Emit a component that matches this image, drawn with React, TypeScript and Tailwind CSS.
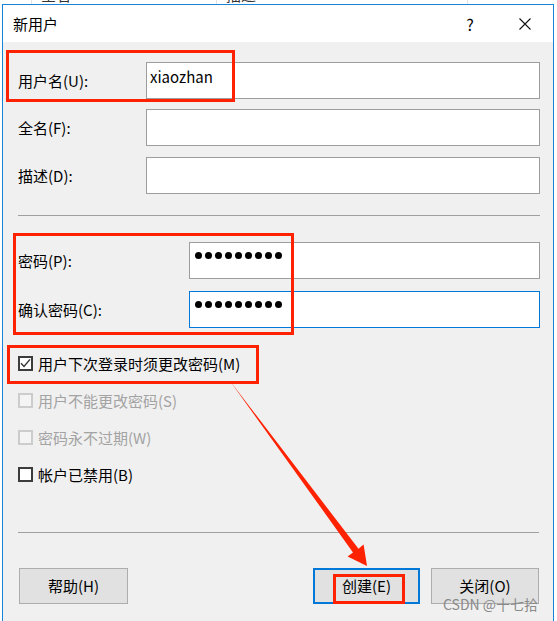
import React from "react";

function TextRow({ label, value }: { label: string; value?: string }) {
  return (
    <div className="flex h-[37px] items-center">
      <div className="w-[128px] shrink-0">{label}</div>
      <div className="flex h-[37px] flex-1 items-start border border-[#9d9d9d] bg-white pl-[3px] pt-[4px] leading-[20px]">
        {value}
      </div>
    </div>
  );
}

function Dots() {
  return (
    <div className="flex gap-[3px]">
      {Array.from({ length: 9 }).map((_, i) => (
        <span key={i} className="block h-[7px] w-[7px] rounded-full bg-black" />
      ))}
    </div>
  );
}

function PassRow({ label, focused }: { label: string; focused?: boolean }) {
  return (
    <div className="flex h-[37px] items-center">
      <div className="w-[171px] shrink-0">{label}</div>
      <div
        className={`flex h-[37px] flex-1 items-start bg-white pl-[5px] pt-[9px] ${
          focused ? "border border-[#0078d7]" : "border border-[#9d9d9d]"
        }`}
      >
        <Dots />
      </div>
    </div>
  );
}

function Check({ label, checked, disabled }: { label: string; checked?: boolean; disabled?: boolean }) {
  return (
    <div className="flex h-[37px] items-center">
      <div
        className={`flex h-[15px] w-[15px] items-center justify-center ${
          disabled ? "border-2 border-[#cccccc] bg-[#f4f4f4]" : "border-2 border-[#3c3c3c] bg-white"
        }`}
      >
        {checked && (
          <svg width="11" height="11" viewBox="0 0 11 11">
            <polyline points="1,5.2 4,8.4 10,1.4" fill="none" stroke="#333" strokeWidth="1.4" />
          </svg>
        )}
      </div>
      <span className={`ml-[5px] ${disabled ? "text-[#a3a3a3]" : "text-black"}`}>{label}</span>
    </div>
  );
}

function Btn({ label, primary, w }: { label: string; primary?: boolean; w: string }) {
  return (
    <div
      className={`flex h-[36px] items-center justify-center bg-[#e1e1e1] ${w} ${
        primary ? "border-2 border-[#0078d7]" : "border border-[#adadad]"
      }`}
    >
      {label}
    </div>
  );
}

export default function App() {
  return (
    <div className="relative h-[621px] w-[557px] overflow-hidden bg-white font-['Noto_Sans_CJK_SC','Microsoft_YaHei',sans-serif] text-[15px] leading-[20px] text-black">
      {/* background window peeking at top */}
      <div className="flex h-[4px] overflow-hidden bg-white text-[15px] leading-[20px] text-[#333]">
        <div className="w-[32px] shrink-0 border-r border-[#e3e3e3]" />
        <div className="w-[185px] shrink-0 border-r border-[#e3e3e3] pl-[9px]">
          <span className="-mt-[15px] block">全名</span>
        </div>
        <div className="w-[251px] shrink-0 border-r border-[#e3e3e3] pl-[9px]">
          <span className="-mt-[15px] block">描述</span>
        </div>
        <div className="flex-1" />
      </div>

      {/* dialog window */}
      <div className="ml-[2px] w-[552px] border-x border-t border-[#1883d7]">
        {/* title bar */}
        <div className="flex h-[37px] items-center bg-white pl-[10px] pr-[5px]">
          <span className="text-[15px]">新用户</span>
          <div className="ml-auto flex h-[37px] w-[46px] items-center justify-center text-[16px] text-black">?</div>
          <div className="ml-[9px] flex h-[37px] w-[46px] items-center justify-center">
            <svg width="12" height="12" viewBox="0 0 12 12">
              <path d="M0.5 0.5 L11.5 11.5 M11.5 0.5 L0.5 11.5" stroke="#111" strokeWidth="1.1" />
            </svg>
          </div>
        </div>

        {/* body */}
        <div className="flex h-[600px] flex-col bg-[#f0f0f0] pl-[15px] pr-[13px] pt-[20px]">
          <TextRow label="用户名(U):" value="xiaozhan" />
          <div className="mt-[10px]">
            <TextRow label="全名(F):" />
          </div>
          <div className="mt-[11px]">
            <TextRow label="描述(D):" />
          </div>

          <div className="mt-[21px] h-px bg-[#a0a0a0]" />

          <div className="mt-[26px]">
            <PassRow label="密码(P):" />
          </div>
          <div className="mt-[12px]">
            <PassRow label="确认密码(C):" focused />
          </div>

          <div className="mt-[17px] flex flex-col">
            <Check label="用户下次登录时须更改密码(M)" checked />
            <Check label="用户不能更改密码(S)" disabled />
            <Check label="密码永不过期(W)" disabled />
            <Check label="帐户已禁用(B)" />
          </div>

          <div className="mt-[39px] mr-[1px] h-px bg-[#a0a0a0]" />

          <div className="mt-[35px] flex items-center pl-[1px] pr-[1px]">
            <Btn label="帮助(H)" w="w-[109px]" />
            <div className="flex-1" />
            <Btn label="创建(E)" primary w="w-[107px]" />
            <div className="w-[11px]" />
            <Btn label="关闭(O)" w="w-[108px]" />
          </div>
        </div>
      </div>

      {/* annotations */}
      <div className="pointer-events-none absolute left-[6px] top-[50px] h-[52px] w-[229px] border-[3px] border-[#ff2200]" />
      <div className="pointer-events-none absolute left-[13px] top-[233px] h-[102px] w-[281px] border-[3px] border-[#ff2200]" />
      <div className="pointer-events-none absolute left-[7px] top-[345px] h-[39px] w-[252px] border-[3px] border-[#ff2200]" />
      <div className="pointer-events-none absolute left-[333px] top-[574px] h-[30px] w-[72px] border-[3px] border-[#ff2200]" />
      <svg className="pointer-events-none absolute left-0 top-0" width="557" height="621" viewBox="0 0 557 621">
        <polygon
          points="230,381 358.5,548.8 363.6,544.6 367,566 347.6,556.6 353,552.4"
          fill="#ff2200"
        />
      </svg>
      <div className="pointer-events-none absolute left-[443px] top-[595px] text-[14px] leading-[18px] text-[#8a8a8a]">
        CSDN @十七拾
      </div>
    </div>
  );
}
